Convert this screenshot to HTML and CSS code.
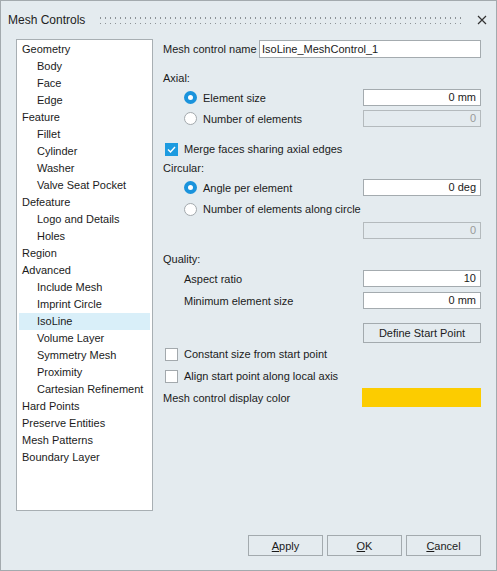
FILE: index.html
```html
<!DOCTYPE html>
<html lang="en">
<head>
    <meta charset="UTF-8">
    <title>Mesh Controls</title>
    <link rel="stylesheet" href="styles.css">
</head>
<body>
    <div class="dialog">
        <div class="titlebar">
            <span class="title">Mesh Controls</span>
            <div class="grip"></div>
            <svg class="close" width="10" height="10" viewBox="0 0 10 10">
                <path d="M1 1 L9 9 M9 1 L1 9" stroke="#333" stroke-width="1.2" fill="none"/>
            </svg>
        </div>

        <div class="content">
            <div class="tree">
                <div class="item">Geometry</div>
                <div class="item child">Body</div>
                <div class="item child">Face</div>
                <div class="item child">Edge</div>
                <div class="item">Feature</div>
                <div class="item child">Fillet</div>
                <div class="item child">Cylinder</div>
                <div class="item child">Washer</div>
                <div class="item child">Valve Seat Pocket</div>
                <div class="item">Defeature</div>
                <div class="item child">Logo and Details</div>
                <div class="item child">Holes</div>
                <div class="item">Region</div>
                <div class="item">Advanced</div>
                <div class="item child">Include Mesh</div>
                <div class="item child">Imprint Circle</div>
                <div class="item child selected">IsoLine</div>
                <div class="item child">Volume Layer</div>
                <div class="item child">Symmetry Mesh</div>
                <div class="item child">Proximity</div>
                <div class="item child">Cartesian Refinement</div>
                <div class="item">Hard Points</div>
                <div class="item">Preserve Entities</div>
                <div class="item">Mesh Patterns</div>
                <div class="item">Boundary Layer</div>
            </div>

            <div class="form">
                <div class="row r-name">
                    <span class="label-name">Mesh control name</span>
                    <div class="field name-field">IsoLine_MeshControl_1</div>
                </div>

                <div class="row r-axial">Axial:</div>
                <div class="row r-esize">
                    <span class="radio on"></span>
                    <span class="opt">Element size</span>
                    <div class="field num">0 mm</div>
                </div>
                <div class="row r-nelem">
                    <span class="radio"></span>
                    <span class="opt">Number of elements</span>
                    <div class="field num disabled">0</div>
                </div>

                <div class="row r-merge">
                    <span class="check on">
                        <svg width="13" height="13" viewBox="0 0 13 13"><path d="M3 6.5 L5.5 9 L10 4" stroke="#fff" stroke-width="1.4" fill="none"/></svg>
                    </span>
                    <span class="chk-label">Merge faces sharing axial edges</span>
                </div>
                <div class="row r-circ">Circular:</div>
                <div class="row r-angle">
                    <span class="radio on"></span>
                    <span class="opt">Angle per element</span>
                    <div class="field num">0 deg</div>
                </div>
                <div class="row r-along">
                    <span class="radio"></span>
                    <span class="opt">Number of elements along circle</span>
                </div>
                <div class="row r-alongval">
                    <div class="field num disabled">0</div>
                </div>

                <div class="row r-quality">Quality:</div>
                <div class="row r-aspect">
                    <span class="sub">Aspect ratio</span>
                    <div class="field num">10</div>
                </div>
                <div class="row r-min">
                    <span class="sub">Minimum element size</span>
                    <div class="field num">0 mm</div>
                </div>
                <div class="row r-start">
                    <button class="btn start-btn">Define Start Point</button>
                </div>
                <div class="row r-const">
                    <span class="check"></span>
                    <span class="chk-label">Constant size from start point</span>
                </div>
                <div class="row r-align">
                    <span class="check"></span>
                    <span class="chk-label">Align start point along local axis</span>
                </div>
                <div class="row r-color">
                    <span class="color-label">Mesh control display color</span>
                    <div class="swatch"></div>
                </div>
            </div>
        </div>

        <div class="footer">
            <button class="btn"><u>A</u>pply</button>
            <button class="btn"><u>O</u>K</button>
            <button class="btn"><u>C</u>ancel</button>
        </div>
    </div>
</body>
</html>
```

FILE: styles.css
```css
* {
    box-sizing: border-box;
    margin: 0;
    padding: 0;
}
body {
    font-family: 'Liberation Sans', Arial, sans-serif;
    font-size: 11px;
    color: #1b1b1b;
    background: #fff;
}
.dialog {
    width: 497px;
    height: 571px;
    border: 1px solid #a3aaae;
    background-color: #e4ebef;
    display: flex;
    flex-direction: column;
}
.titlebar {
    height: 38px;
    display: flex;
    align-items: center;
    padding: 0 9px 0 7px;
}
.title {
    font-size: 12px;
    color: #222;
}
.grip {
    flex: 1;
    height: 8px;
    margin: 0 12px 0 13px;
    background-image: radial-gradient(circle, #8c9296 0.9px, transparent 1.1px);
    background-size: 5px 6px;
    background-position: 0 -1px;
}
.close {
    display: block;
}
.content {
    display: flex;
    padding: 0 15px 0 15px;
}
.tree {
    width: 137px;
    height: 472px;
    background-color: #fff;
    border: 1px solid #a8afb3;
    padding: 1px 2px;
}
.item {
    height: 17px;
    line-height: 17px;
    padding-left: 3px;
    white-space: nowrap;
}
.item.child {
    padding-left: 18px;
}
.item.selected {
    background-color: #d9eff9;
}
.form {
    margin-left: 10px;
    width: 318px;
}
.row {
    display: flex;
    align-items: center;
    height: 16px;
}
.field {
    height: 17px;
    line-height: 15px;
    background-color: #fff;
    border: 1px solid #a4abaf;
    padding: 0 4px;
    margin-left: auto;
    width: 118px;
    white-space: nowrap;
}
.field.num {
    text-align: right;
}
.field.disabled {
    background-color: #e4ebef;
    border-color: #b4babd;
    color: #9a9a9a;
}
.name-field {
    width: 222px;
    padding-left: 2px;
}
.r-name { height: 18px; margin-top: 1px; }
.r-name .field { height: 18px; line-height: 16px; }
.r-axial { margin-top: 12px; }
.r-esize { height: 17px; margin-top: 3px; }
.r-nelem { height: 17px; margin-top: 4px; }
.r-merge { margin-top: 14px; }
.r-circ { margin-top: 3px; }
.r-angle { height: 17px; margin-top: 3px; }
.r-along { margin-top: 5px; }
.r-alongval { height: 17px; margin-top: 5px; }
.r-quality { margin-top: 12px; }
.r-aspect { height: 17px; margin-top: 3px; }
.r-min { height: 17px; margin-top: 5px; }
.r-start { height: 20px; margin-top: 14px; }
.r-const { margin-top: 3px; }
.r-align { margin-top: 6px; }
.r-color { height: 19px; margin-top: 4px; }
.radio {
    width: 13px;
    height: 13px;
    border-radius: 50%;
    border: 1px solid #a3a9ad;
    background-color: #fff;
    margin-left: 21px;
    margin-right: 6px;
    flex-shrink: 0;
}
.radio.on {
    border: 4.5px solid #1a93dc;
    background-color: #fff;
}
.check {
    width: 13px;
    height: 13px;
    border: 1px solid #a3a9ad;
    background-color: #fff;
    margin-left: 2px;
    margin-right: 6px;
    flex-shrink: 0;
}
.check.on {
    border: none;
    background-color: #1d9be0;
}
.check svg {
    display: block;
}
.sub {
    margin-left: 21px;
}
.btn {
    font-family: 'Liberation Sans', Arial, sans-serif;
    font-size: 11px;
    color: #1b1b1b;
    background-color: #e4ebef;
    border: 1px solid #a3aaae;
    height: 21px;
    width: 75px;
}
.start-btn {
    margin-left: auto;
    width: 118px;
    height: 20px;
}
.swatch {
    margin-left: auto;
    width: 119px;
    height: 19px;
    background-color: #fccc00;
}
.footer {
    display: flex;
    justify-content: flex-end;
    gap: 4px;
    padding: 24px 15px 0 0;
}
```
